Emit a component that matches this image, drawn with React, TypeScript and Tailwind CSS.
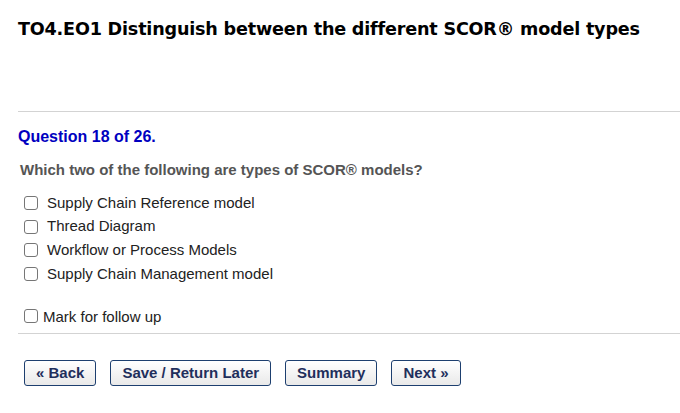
import React from "react";

const options = [
  "Supply Chain Reference model",
  "Thread Diagram",
  "Workflow or Process Models",
  "Supply Chain Management model",
];

const buttons = ["« Back", "Save / Return Later", "Summary", "Next »"];

function Box() {
  return (
    <input
      type="checkbox"
      className="appearance-none w-[14px] h-[14px] border border-[#767676] rounded-[3px] bg-white shrink-0"
    />
  );
}

export default function App() {
  return (
    <div className="w-[680px] h-[413px] bg-white overflow-hidden font-['Liberation_Sans',Arial,sans-serif]">
      <div className="pl-[18px]">
        <h1 className="pt-[17px] h-[111px] text-[17.6px] leading-[24px] font-bold text-black font-['DejaVu_Sans',Verdana,sans-serif] tracking-[-0.2px]">
          TO4.EO1 Distinguish between the different SCOR® model types
        </h1>
        <div className="border-t border-[#d3d3d3]" />
        <div className="pt-[16px] text-[16px] leading-[18px] font-bold text-[#0000c0]">
          Question 18 of 26.
        </div>
        <div className="pt-[15px] pl-[2px] text-[15px] leading-[18px] font-bold text-[#555555]">
          Which two of the following are types of SCOR® models?
        </div>
        <div className="pt-[12px] flex flex-col">
          {options.map((o) => (
            <label key={o} className="flex items-center h-[23.7px] pl-[6px] text-[15px] text-[#222222]">
              <Box />
              <span className="ml-[9px]">{o}</span>
            </label>
          ))}
        </div>
        <label className="mt-[18px] flex items-center h-[24px] pl-[6px] text-[15px] text-[#222222]">
          <Box />
          <span className="ml-[5px] mt-[2px]">Mark for follow up</span>
        </label>
        <div className="mt-[5px] border-t border-[#d3d3d3]" />
        <div className="pt-[26px] pl-[6px] flex gap-[14px]">
          {buttons.map((b) => (
            <button
              key={b}
              className="h-[26px] px-[11px] border border-[#1d3f6f] rounded-[3px] bg-gradient-to-b from-white to-[#e9e9e9] text-[15px] font-bold text-[#1f2f5c]"
            >
              {b}
            </button>
          ))}
        </div>
      </div>
    </div>
  );
}
